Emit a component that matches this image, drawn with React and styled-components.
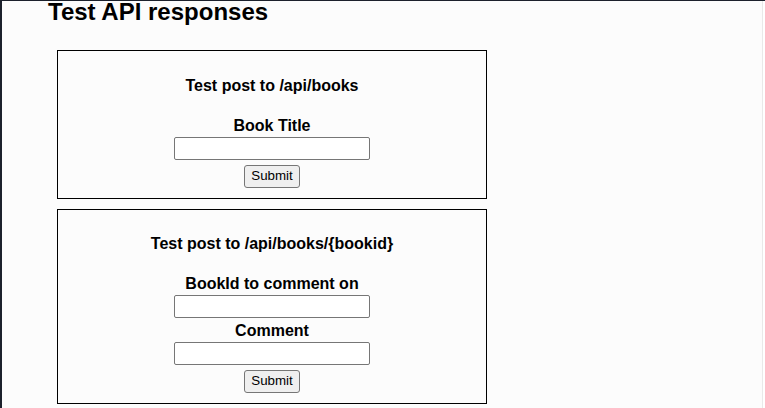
import React from "react"
import styled, { createGlobalStyle } from 'styled-components';

const ink = "#000000";
const page = "#fcfcfc";
const frame = "#1c212c";
const control = "#767676";

const GlobalStyle = createGlobalStyle`
  html, body {
    margin: 0;
    padding: 0;
    background: #ffffff;
    font-family: 'Liberation Sans', Arial, sans-serif;
    color: ${ink};
  }
`;

const Window = styled.div`
  width: 765px;
  height: 408px;
  box-sizing: border-box;
  border-top: 1px solid ${frame};
  border-left: 2px solid ${frame};
  background: #ffffff;
  display: flex;
  overflow: hidden;
`;

const Viewport = styled.main`
  flex: 1;
  margin-right: 2px;
  background: ${page};
  border-right: 1px solid #e9e9e9;
  display: flex;
  flex-direction: column;
`;

const Heading = styled.h1`
  margin: -3px 0 0 0;
  padding-left: 46px;
  font-size: 24px;
  line-height: 28px;
  font-weight: bold;
`;

const Cards = styled.div`
  display: flex;
  flex-direction: column;
  gap: 10px;
  margin: 24px 0 0 55px;
`;

const Card = styled.form`
  width: 430px;
  box-sizing: border-box;
  border: 1px solid ${ink};
  padding: ${props => props.$top || 26}px 0 10px;
  display: flex;
  flex-direction: column;
  align-items: center;
`;

const CardTitle = styled.h3`
  margin: 0 0 22px;
  font-size: 16px;
  line-height: 18px;
  font-weight: bold;
`;

const Label = styled.label`
  display: block;
  margin-top: ${props => props.$gap || 0}px;
  font-size: 16px;
  line-height: 18px;
  font-weight: bold;
`;

const TextInput = styled.input`
  width: 196px;
  height: 23px;
  box-sizing: border-box;
  margin: 2px 0 0;
  border: 1px solid ${control};
  border-radius: 2px;
  background: #ffffff;
  padding: 1px 2px;
`;

const SubmitButton = styled.button`
  width: 56px;
  height: 23px;
  box-sizing: border-box;
  margin-top: 5px;
  padding: 0 0 2px;
  border: 1px solid ${control};
  border-radius: 3px;
  background: #efefef;
  color: ${ink};
  font-family: 'Liberation Sans', Arial, sans-serif;
  font-size: 13.33px;
`;

const App = () => (
  <Window>
    <GlobalStyle />
    <Viewport>
      <Heading>Test API responses</Heading>

      <Cards>
        <Card onSubmit={e => e.preventDefault()}>
          <CardTitle>Test post to /api/books</CardTitle>
          <Label>Book Title</Label>
          <TextInput type="text" />
          <SubmitButton>Submit</SubmitButton>
        </Card>

        <Card $top={25} onSubmit={e => e.preventDefault()}>
          <CardTitle>Test post to /api/books/{'{bookid}'}</CardTitle>
          <Label>BookId to comment on</Label>
          <TextInput type="text" />
          <Label $gap={4}>Comment</Label>
          <TextInput type="text" />
          <SubmitButton>Submit</SubmitButton>
        </Card>
      </Cards>
    </Viewport>
  </Window>
)

export default App;
